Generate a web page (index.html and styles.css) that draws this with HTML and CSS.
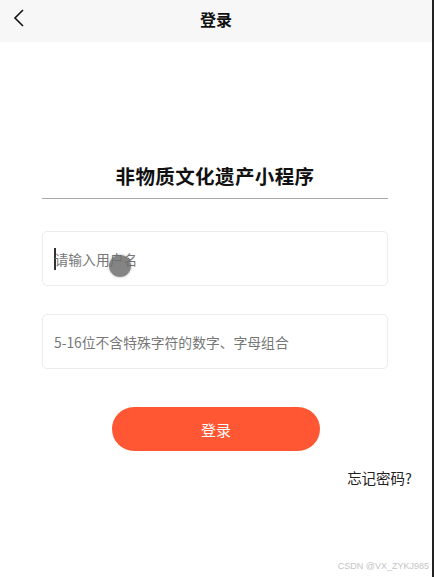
FILE: index.html
```html
<!DOCTYPE html>
<html lang="zh">
<head>
<meta charset="utf-8">
<link rel="stylesheet" href="styles.css">
</head>
<body>
<div class="page">
  <header class="navbar">
    <svg class="back" width="14" height="20" viewBox="0 0 14 20"><path d="M11 2 L3 10 L11 18" fill="none" stroke="#111" stroke-width="1.6"/></svg>
    <span class="nav-title">登录</span>
  </header>
  <main class="content">
    <h1 class="app-title">非物质文化遗产小程序</h1>
    <div class="divider"></div>
    <div class="field">
      <span class="cursor"></span><span class="placeholder">请输入用户名</span>
      <span class="touch"></span>
    </div>
    <div class="field field-2">
      <span class="placeholder">5-16位不含特殊字符的数字、字母组合</span>
    </div>
    <div class="btn-row"><button class="login-btn">登录</button></div>
    <div class="forgot-row"><span class="forgot">忘记密码?</span></div>
  </main>
  <div class="watermark">CSDN @VX_ZYKJ985</div>
</div>
</body>
</html>
```
FILE: styles.css
```css
* { box-sizing: border-box; }
html, body { margin: 0; padding: 0; }
body { font-family: "Noto Sans CJK SC", "Noto Sans", sans-serif; background: #fff; }
.page { width: 434px; height: 577px; position: relative; border-right: 2px solid #222; overflow: hidden; }
.navbar { height: 42px; background: #f7f7f7; display: flex; align-items: center; justify-content: center; position: relative; padding-bottom: 4px; }
.back { position: absolute; left: 12px; top: 8px; }
.nav-title { font-size: 16px; font-weight: 700; color: #111; }
.content { padding: 0 44px 0 42px; display: flex; flex-direction: column; }
.app-title { margin: 118px 0 0; font-size: 19.5px; font-weight: 700; text-align: center; color: #111; line-height: 32px; letter-spacing: 0.4px; }
.divider { height: 1px; background: #a8a8a8; margin-top: 6px; }
.field { height: 55px; border: 1px solid #ececec; border-radius: 5px; margin-top: 32px; display: flex; align-items: center; padding-left: 11px; position: relative; }
.field-2 { margin-top: 28px; }
.placeholder { font-size: 13.8px; color: #777; }
.cursor { width: 1.5px; height: 22px; background: #333; margin-right: -1px; }
.touch { position: absolute; left: 66px; top: 23px; width: 22px; height: 22px; border-radius: 50%; background: rgba(110,110,110,0.85); box-shadow: 0 0 3px rgba(0,0,0,0.3); }
.btn-row { display: flex; justify-content: center; margin-top: 38px; }
.login-btn { width: 208px; height: 44px; border: none; border-radius: 22px; background: #ff5733; color: #fff; font-family: inherit; font-size: 15px; padding: 0; margin-left: 2px; }
.forgot-row { display: flex; justify-content: flex-end; margin-top: 16px; margin-right: -24px; }
.forgot { font-size: 14.5px; color: #222; }
.watermark { position: absolute; right: 3px; bottom: 6px; font-family: "Liberation Sans", sans-serif; font-size: 9px; color: #c4c4c4; }
```
